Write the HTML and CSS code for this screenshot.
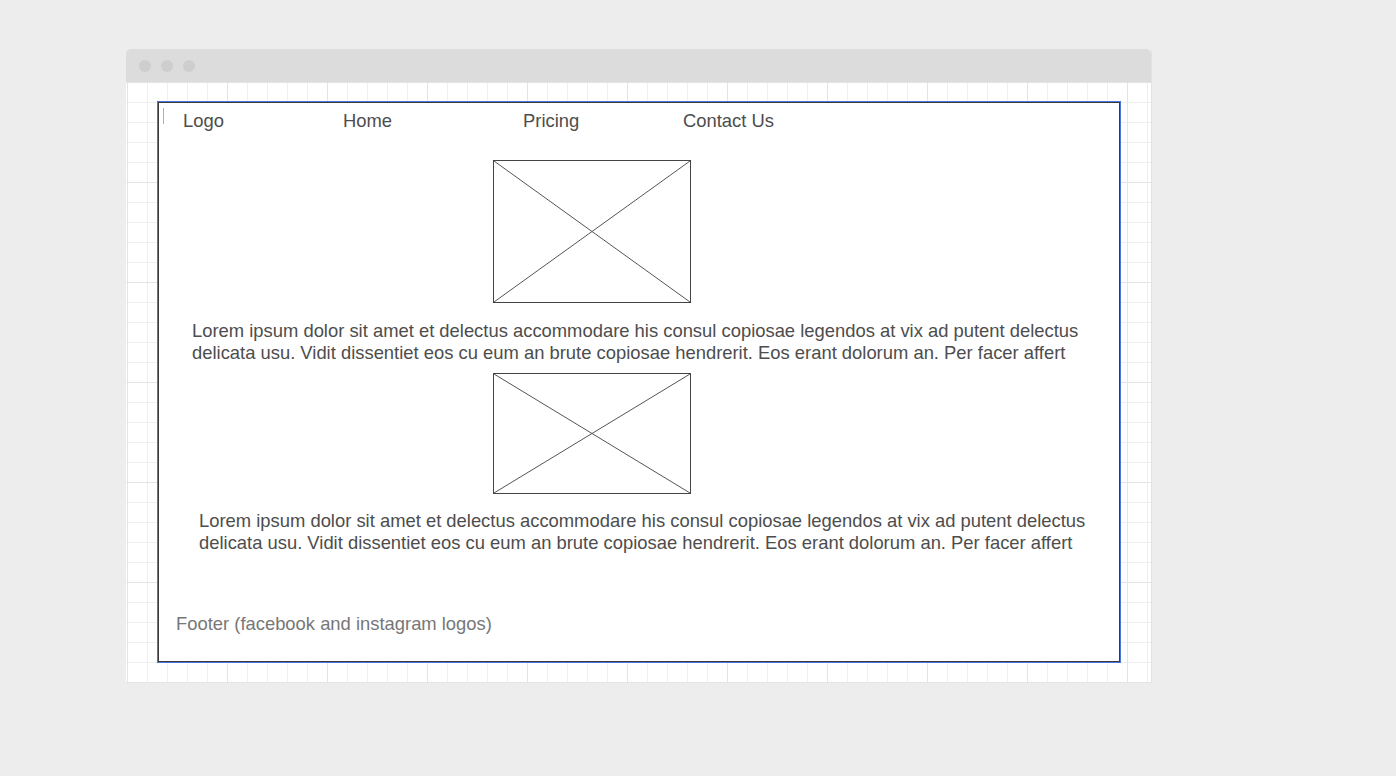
FILE: index.html
```html
<!DOCTYPE html>
<html lang="en">
<head>
    <meta charset="UTF-8">
    <meta name="viewport" content="width=device-width, initial-scale=1.0">
    <title>Wireframe</title>
    <link rel="stylesheet" href="styles.css">
</head>
<body>
    <div class="window">
        <div class="titlebar">
            <span class="dot"></span>
            <span class="dot"></span>
            <span class="dot"></span>
        </div>
        <div class="canvas">
            <div class="frame">
                <span class="caret"></span>
                <nav class="nav">
                    <span class="nav-logo">Logo</span>
                    <span class="nav-home">Home</span>
                    <span class="nav-pricing">Pricing</span>
                    <span class="nav-contact">Contact Us</span>
                </nav>

                <div class="placeholder placeholder-big">
                    <svg viewBox="0 0 198 143" preserveAspectRatio="none">
                        <line x1="0" y1="0" x2="198" y2="143" />
                        <line x1="198" y1="0" x2="0" y2="143" />
                    </svg>
                </div>

                <p class="text text-first">Lorem ipsum dolor sit amet et delectus accommodare his consul copiosae legendos at vix ad putent delectus<br>delicata usu. Vidit dissentiet eos cu eum an brute copiosae hendrerit. Eos erant dolorum an. Per facer affert</p>

                <div class="placeholder placeholder-small">
                    <svg viewBox="0 0 198 121" preserveAspectRatio="none">
                        <line x1="0" y1="0" x2="198" y2="121" />
                        <line x1="198" y1="0" x2="0" y2="121" />
                    </svg>
                </div>

                <p class="text text-second">Lorem ipsum dolor sit amet et delectus accommodare his consul copiosae legendos at vix ad putent delectus<br>delicata usu. Vidit dissentiet eos cu eum an brute copiosae hendrerit. Eos erant dolorum an. Per facer affert</p>

                <footer class="footer">Footer (facebook and instagram logos)</footer>
            </div>
        </div>
    </div>
</body>
</html>
```

FILE: styles.css
```css
* {
    margin: 0;
    padding: 0;
    box-sizing: border-box;
}

body {
    background-color: #ededed;
    font-family: "Liberation Sans", Arial, sans-serif;
    color: #4d4d4d;
    padding: 49px 0 0 126px;
}

.window {
    width: 1025px;
    box-shadow: 1px 1px 0 #e2e2e2;
}

.titlebar {
    height: 33px;
    background-color: #dcdcdc;
    border-radius: 5px 5px 0 0;
    display: flex;
    align-items: center;
    gap: 10px;
    padding-left: 13px;
}

.dot {
    width: 12px;
    height: 12px;
    border-radius: 50%;
    background-color: #cecece;
}

/* grid paper */
.canvas {
    height: 601px;
    background-color: #fff;
    background-image:
        linear-gradient(to right, #e4e4e4 1px, transparent 1px),
        linear-gradient(to bottom, #e4e4e4 1px, transparent 1px),
        linear-gradient(to right, #efefef 1px, transparent 1px),
        linear-gradient(to bottom, #efefef 1px, transparent 1px);
    background-size: 100px 100px, 100px 100px, 20px 20px, 20px 20px;
    background-position: 1px 0, 0 0, 1px 0, 0 0;
    padding: 20px 0 0 32px;
}

.frame {
    position: relative;
    width: 962px;
    height: 560px;
    background: #fff;
    border: 1px solid #3a3a3a;
    outline: 1px solid #4a74e0;
}

.caret {
    position: absolute;
    left: 4px;
    top: 5px;
    width: 1px;
    height: 16px;
    background: #b0b0b0;
}

.nav {
    display: flex;
    font-size: 18.4px;
    line-height: 20px;
    padding: 8px 0 0 24px;
}

.nav-logo { width: 160px; }
.nav-home { width: 180px; }
.nav-pricing { width: 160px; }

.placeholder {
    width: 198px;
    margin-left: 334px;
    border: 1px solid #444;
}

.placeholder svg {
    display: block;
    width: 100%;
    height: 100%;
}

.placeholder line {
    stroke: #555;
    stroke-width: 1;
    vector-effect: non-scaling-stroke;
}

.placeholder-big {
    height: 143px;
    margin-top: 29px;
}

.placeholder-small {
    height: 121px;
    margin-top: 9px;
}

.text {
    font-size: 18.4px;
    line-height: 22px;
    white-space: nowrap;
}

.text-first {
    margin: 17px 0 0 33px;
}

.text-second {
    margin: 16px 0 0 40px;
}

.footer {
    font-size: 18.4px;
    line-height: 20px;
    color: #777;
    margin: 60px 0 0 17px;
}
```
